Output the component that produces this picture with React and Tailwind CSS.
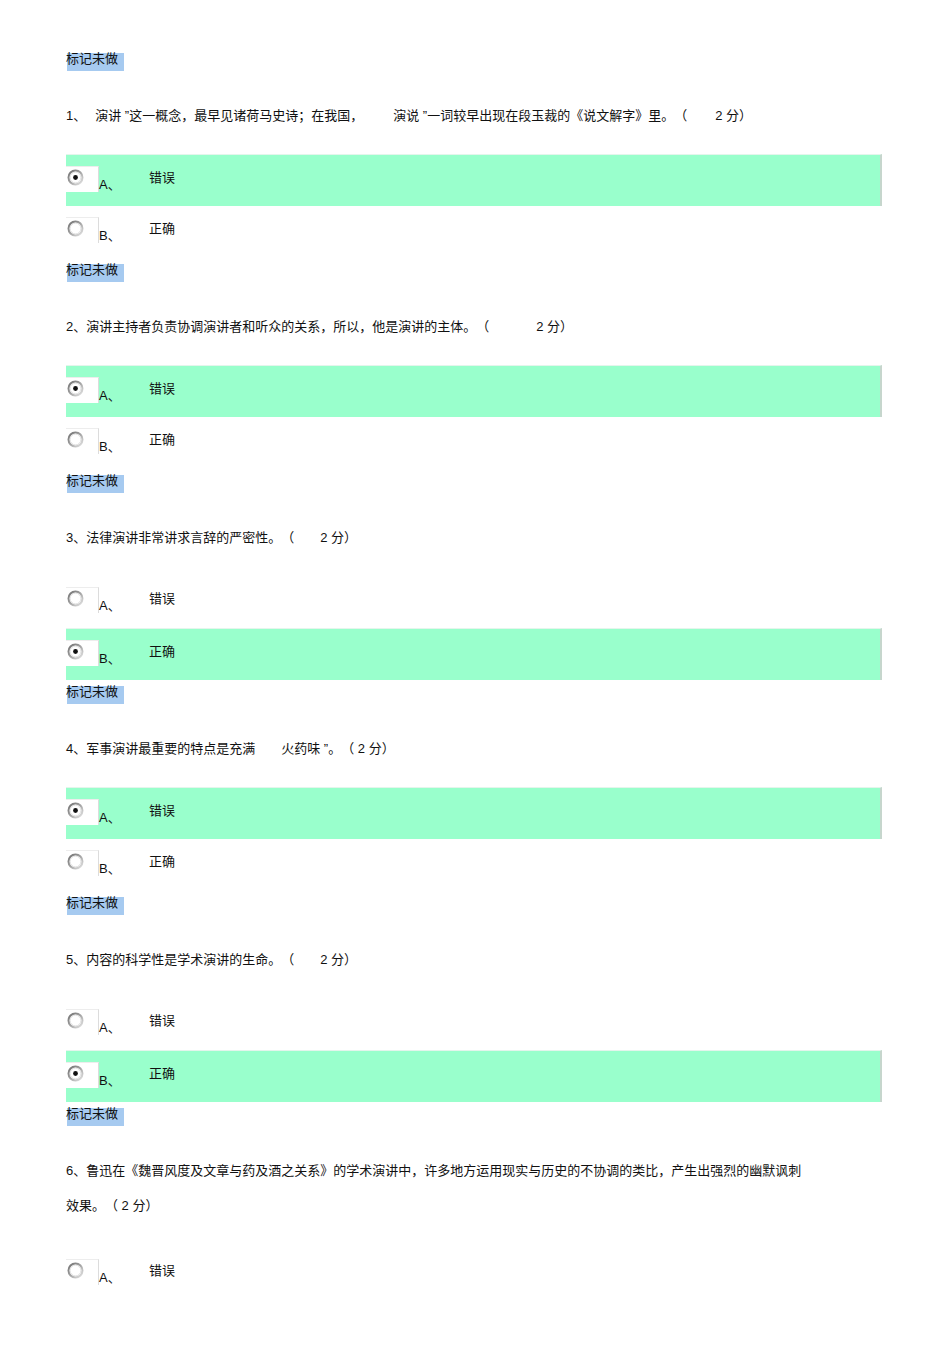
import React from 'react';

const font = { fontFamily: '"Liberation Sans", "Noto Sans CJK SC", sans-serif' };

// 每题：题干分段（带左边距类名）+ 选中项
const questions = [
  {
    lines: [
      [
        ['1、', ''],
        ['演讲 ”这一概念，最早见诸荷马史诗；在我国，', 'ml-[9px]'],
        ['演说 ”一词较早出现在段玉裁的《说文解字》里。（', 'ml-[30px]'],
        ['2 分）', 'ml-[28px]'],
      ],
    ],
    options: ['错误', '正确'],
    picked: 0,
  },
  {
    lines: [[['2、演讲主持者负责协调演讲者和听众的关系，所以，他是演讲的主体。（', ''], ['2 分）', 'ml-[47px]']]],
    options: ['错误', '正确'],
    picked: 0,
  },
  {
    lines: [[['3、法律演讲非常讲求言辞的严密性。（', ''], ['2 分）', 'ml-[26px]']]],
    options: ['错误', '正确'],
    picked: 1,
  },
  {
    lines: [[['4、军事演讲最重要的特点是充满', ''], ['火药味 ”。（ 2 分）', 'ml-[26px]']]],
    options: ['错误', '正确'],
    picked: 0,
  },
  {
    lines: [[['5、内容的科学性是学术演讲的生命。（', ''], ['2 分）', 'ml-[26px]']]],
    options: ['错误', '正确'],
    picked: 1,
  },
  {
    lines: [
      [['6、鲁迅在《魏晋风度及文章与药及酒之关系》的学术演讲中，许多地方运用现实与历史的不协调的类比，产生出强烈的幽默讽刺', '']],
      [['效果。（ 2 分）', '']],
    ],
    options: ['错误'],
    picked: -1,
  },
];

function Radio({ checked, id }) {
  return (
    <svg width="17" height="17" viewBox="0 0 17 17" className="ml-px mt-[2px] block">
      <defs>
        <linearGradient id={id} x1="0" y1="0" x2="1" y2="1">
          <stop offset="0" stopColor="#6f6f6f" />
          <stop offset="0.5" stopColor="#a4a4a4" />
          <stop offset="1" stopColor="#e6e6e6" />
        </linearGradient>
      </defs>
      <circle cx="8.5" cy="8.5" r="7" fill="#fff" stroke={`url(#${id})`} strokeWidth="2" />
      <circle cx="8.5" cy="8.5" r="5.4" fill="none" stroke="#d4d4d4" strokeWidth="0.7" />
      {checked && <circle cx="8.5" cy="8.5" r="2.4" fill="#111" />}
    </svg>
  );
}

function OptionRow({ letter, text, checked, id }) {
  return (
    <div
      className={`flex h-[52px] items-start ${
        checked ? 'bg-[#99ffcc] border-t border-t-[#e4f5ec] border-r-2 border-r-[#c6d6cd]' : ''
      }`}
    >
      <div className="mt-[11px] h-[26px] w-[33px] shrink-0 bg-white border-t border-t-[#ededed] border-r border-r-[#dcdcdc]">
        <Radio checked={checked} id={id} />
      </div>
      <span className="mt-[22px] w-[50px] shrink-0 text-[13px] leading-[16px]">{letter}、</span>
      <span className="mt-[15px] text-[13px] leading-[16px]">{text}</span>
    </div>
  );
}

export default function App() {
  return (
    <div className="min-h-screen bg-white text-[#111] pt-[53px] [text-spacing-trim:space-all]" style={font}>
      <div className="ml-[66px] w-[816px]">
        {questions.map((q, qi) => (
          <div key={qi} className={qi === 0 ? '' : 'mt-[6px]'}>
            <div className="ml-px h-[18px] w-[57px] bg-[#a6caf0] text-[13px] leading-[11px] -indent-px">标记未做</div>
            <div className="mt-[27px] text-[13px] leading-[35px] whitespace-pre">
              {q.lines.map((line, li) => (
                <div key={li}>
                  {line.map(([t, cls], si) => (
                    <span key={si} className={`inline-block ${cls}`}>
                      {t}
                    </span>
                  ))}
                </div>
              ))}
            </div>
            <div className={q.lines.length > 1 ? 'mt-[25px]' : 'mt-[21px]'}>
              {q.options.map((o, oi) => (
                <OptionRow
                  key={oi}
                  letter={oi === 0 ? 'A' : 'B'}
                  text={o}
                  checked={q.picked === oi}
                  id={`rg-${qi}-${oi}`}
                />
              ))}
            </div>
          </div>
        ))}
      </div>
    </div>
  );
}
